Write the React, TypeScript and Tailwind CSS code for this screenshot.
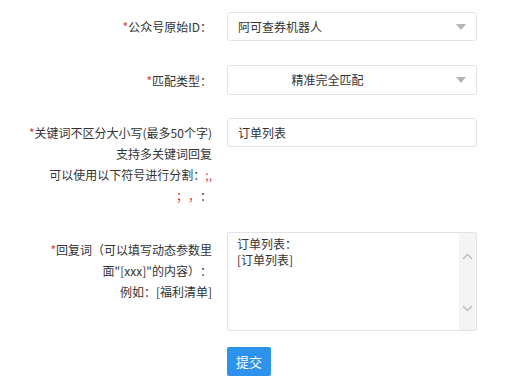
import React from "react";

const font = {
  fontFamily:
    '"Microsoft YaHei", "Noto Sans CJK SC", "Liberation Sans", sans-serif',
};

const Star = () => <span className="text-[#d9363e]">*</span>;

const Arrow = () => (
  <svg width="10" height="6" viewBox="0 0 10 6" className="absolute right-[10px] top-1/2 -translate-y-1/2">
    <path d="M0 0 L10 0 L5 6 Z" fill="#b5b5b5" />
  </svg>
);

export default function App() {
  return (
    <div
      className="w-[526px] h-[386px] bg-white pt-[12px] text-[12px] text-[#333] [text-spacing-trim:space-all]"
      style={font}
    >
      {/* 公众号原始ID */}
      <div className="flex items-center">
        <div className="w-[212px] text-right leading-[21px]">
          <Star />
          公众号原始ID：
        </div>
        <div className="relative ml-[15px] w-[250px] h-[29px] border border-[#e3e3e3] rounded-[3px] flex items-center pl-[10px] bg-white">
          阿可查券机器人
          <Arrow />
        </div>
      </div>

      {/* 匹配类型 */}
      <div className="flex items-center mt-[24px]">
        <div className="w-[212px] text-right leading-[21px]">
          <Star />
          匹配类型：
        </div>
        <div className="relative ml-[15px] w-[250px] h-[30px] border border-[#e6e6e6] rounded-[2px] flex items-center justify-center pr-[49px] bg-white">
          精准完全匹配
          <Arrow />
        </div>
      </div>

      {/* 关键词 */}
      <div className="flex items-start mt-[23px]">
        <div className="w-[212px] text-right leading-[21px] pt-[4px]">
          <div>
            <Star />
            关键词不区分大小写(最多50个字)
          </div>
          <div>支持多关键词回复</div>
          <div>
            可以使用以下符号进行分割：<span className="text-[#e4393c]">;,</span>
          </div>
          <div>
            <span className="text-[#e4393c]">；，</span>：
          </div>
        </div>
        <div className="ml-[15px] w-[250px] h-[29px] border border-[#e3e3e3] rounded-[3px] flex items-center pl-[10px] bg-white">
          订单列表
        </div>
      </div>

      {/* 回复词 */}
      <div className="flex items-start mt-[26px]">
        <div className="w-[212px] text-right leading-[21px] pt-[7px]">
          <div>
            <Star />
            回复词（可以填写动态参数里
          </div>
          <div>面"[xxx]"的内容）：</div>
          <div>例如：[福利清单]</div>
        </div>
        <div className="ml-[15px] w-[250px] h-[99px] border border-[#e3e3e3] rounded-[2px] flex bg-white">
          <div className="flex-1 pl-[9px] pt-[3px] leading-[16px]">
            <div>订单列表：</div>
            <div>[订单列表]</div>
          </div>
          <div className="w-[17px] h-full bg-[#f4f4f4] flex flex-col items-center justify-between pt-[20px] pb-[18px]">
            <svg width="11" height="7" viewBox="0 0 11 7">
              <path d="M1 6 L5.5 1.5 L10 6" fill="none" stroke="#bdbdbd" strokeWidth="1.5" />
            </svg>
            <svg width="11" height="7" viewBox="0 0 11 7">
              <path d="M1 1 L5.5 5.5 L10 1" fill="none" stroke="#bdbdbd" strokeWidth="1.5" />
            </svg>
          </div>
        </div>
      </div>

      {/* 提交 */}
      <div className="flex mt-[16px]">
        <div className="w-[212px]" />
        <button className="ml-[15px] w-[44px] h-[29px] rounded-[2px] bg-[#2d92ec] text-white text-[13px] flex items-center justify-center">
          提交
        </button>
      </div>
    </div>
  );
}
